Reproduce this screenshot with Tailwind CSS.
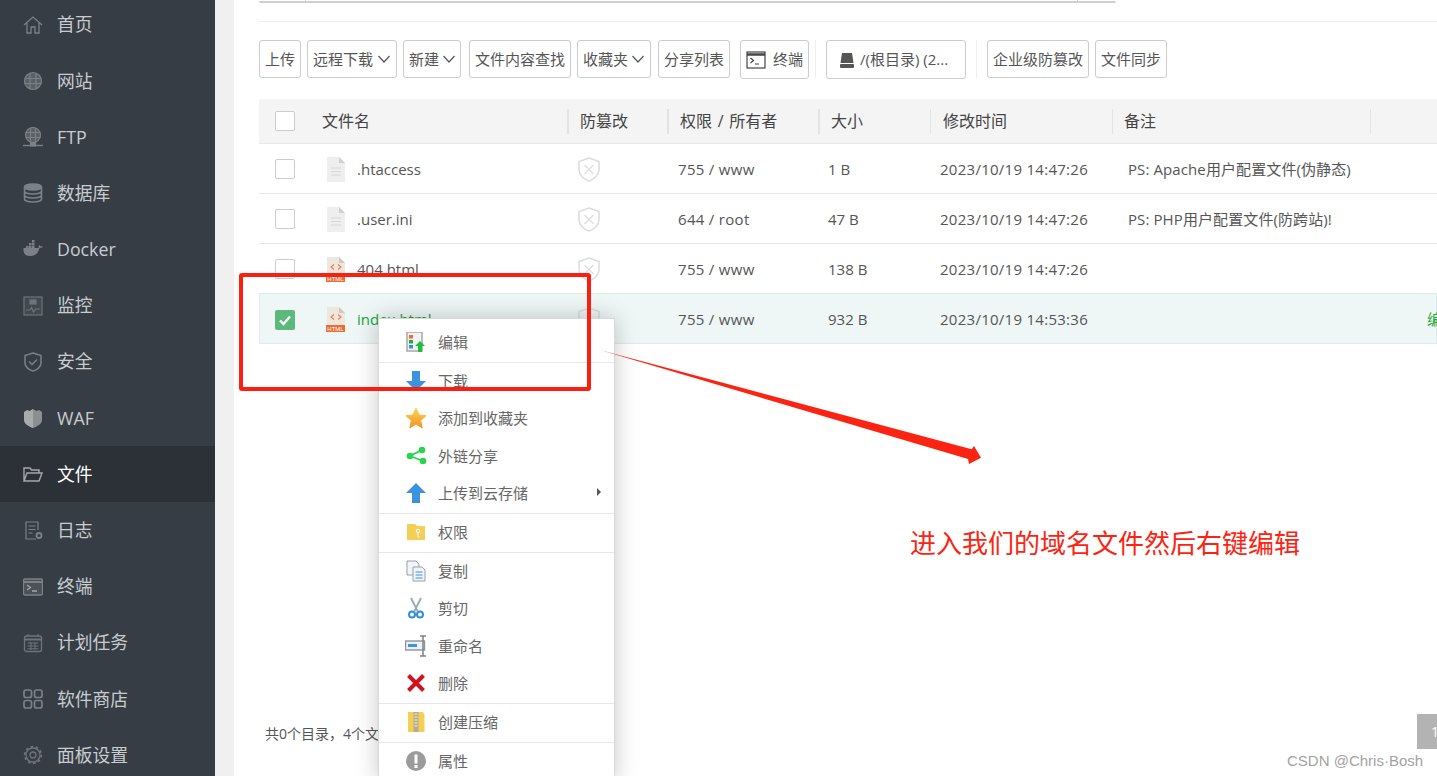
<!DOCTYPE html>
<html lang="zh-CN">
<head>
  <meta charset="UTF-8" />
  <script src="https://cdn.jsdelivr.net/npm/@tailwindcss/browser@4"></script>
  <title>文件</title>
</head>
<body class="relative flex h-screen w-screen overflow-hidden bg-white font-['Open_Sans','Noto_Sans_CJK_SC',sans-serif] text-[15px] text-[#555]">

  <!-- Sidebar -->
  <nav class="w-[215px] h-full shrink-0 bg-[#363d45] text-[17.8px] text-[#c8ccd0] overflow-hidden">
    <div class="-mt-[3.400px]">
      <a class="flex items-center h-[56.2px] pl-[23px]">
        <svg class="w-5 h-5 mr-[14px]" viewBox="0 0 20 20" fill="none" stroke="#7c8187" stroke-width="1.300"><path d="M1 10 10 2l9 8M4 8v10h4v-6h4v6h4V8"/></svg>首页</a>
      <a class="flex items-center h-[56.2px] pl-[23px]">
        <svg class="w-5 h-5 mr-[14px]" viewBox="0 0 20 20" fill="none" stroke="#7c8187" stroke-width="1.200"><circle cx="10" cy="10" r="8.500" fill="#5b6066"/><path d="M1.500 7.500h17M1.500 12.500h17M7 2v16M13 2v16"/></svg>网站</a>
      <a class="flex items-center h-[56.2px] pl-[23px]">
        <svg class="w-5 h-5 mr-[14px]" viewBox="0 0 20 20" fill="none" stroke="#7c8187" stroke-width="1.100"><circle cx="10" cy="8" r="7.500" fill="#5b6066"/><path d="M2.500 5.500h15M2.500 10.500h15M7.500 1v14M12.500 1v14"/><path d="M0 18.500h20" stroke-width="1.400"/><rect x="7.500" y="15.500" width="5" height="3.500" fill="#7c8187"/></svg>FTP</a>
      <a class="flex items-center h-[56.2px] pl-[23px]">
        <svg class="w-5 h-5 mr-[14px]" viewBox="0 0 20 20" fill="none" stroke="#7c8187" stroke-width="1.600"><ellipse cx="10" cy="4" rx="8.500" ry="3" fill="#7c8187"/><path d="M1.500 4v12c0 1.700 3.800 3 8.500 3s8.500-1.300 8.500-3V4M1.500 8c0 1.700 3.800 3 8.500 3s8.500-1.300 8.500-3M1.500 12c0 1.700 3.800 3 8.500 3s8.500-1.300 8.500-3"/></svg>数据库</a>
      <a class="flex items-center h-[56.2px] pl-[23px]">
        <svg class="w-5 h-5 mr-[14px]" viewBox="0 0 20 20" fill="#7c8187"><path d="M0 10.500h15c1 0 1.500-1 1.700-1.800 1 .3 2.300.2 3.300-.7-.7-.6-1.600-.8-2.500-.6-.3-.8-.8-1.200-1.300-1.500-.6 1-.8 2.200-.5 3H.5C0 13 1.500 17 6.500 17c5 0 8-2 9.500-6.500z"/><path d="M3 7h2.500v2.500H3zM6 7h2.500v2.500H6zM9 7h2.500v2.500H9zM6 4h2.500v2.500H6zM9 4h2.500v2.500H9zM9 1h2.500v2.500H9z"/></svg>Docker</a>
      <a class="flex items-center h-[56.2px] pl-[23px]">
        <svg class="w-5 h-5 mr-[14px]" viewBox="0 0 20 20" fill="none" stroke="#6f747a" stroke-width="1.200"><rect x="1" y="1" width="18" height="18" fill="#43494f"/><path d="M3 14h4l1.500-2.500L10.500 16l2-3H17"/><rect x="7" y="4" width="6" height="4" fill="#6f747a"/></svg>监控</a>
      <a class="flex items-center h-[56.2px] pl-[23px]">
        <svg class="w-5 h-5 mr-[14px]" viewBox="0 0 20 20" fill="none" stroke="#7c8187" stroke-width="1.500"><path d="M10 1 18 3.500V11c0 4-4 7-8 8-4-1-8-4-8-8V3.500z"/><path d="M6 9.500l3 3 5-5"/></svg>安全</a>
      <a class="flex items-center h-[56.2px] pl-[23px]">
        <svg class="w-5 h-5 mr-[14px]" viewBox="0 0 20 20"><path d="M10 1 6.500 3 4 2 1 4v8c0 4 5 6.500 9 8z" fill="#a9acaf"/><path d="M10 1l3.500 2L16 2l3 2v8c0 4-5 6.500-9 8z" fill="#8b8e92"/></svg>WAF</a>
      <a class="flex items-center h-[56.2px] pl-[23px] bg-[#2c3138] text-white">
        <svg class="w-5 h-5 mr-[14px]" viewBox="0 0 20 20" fill="none" stroke="#a4a7ab" stroke-width="1.400"><path d="M1 17V4h6l1.500 2H16v3M1 17l3-8h15l-3 8z"/></svg>文件</a>
      <a class="flex items-center h-[56.2px] pl-[23px]">
        <svg class="w-5 h-5 mr-[14px]" viewBox="0 0 20 20" fill="none" stroke="#7c8187" stroke-width="1.200"><path d="M15 10V2H3v17h10M5.500 6h7M5.500 9.500h7M5.500 13h4"/><circle cx="16" cy="15.500" r="2.500" stroke-width="1.800"/></svg>日志</a>
      <a class="flex items-center h-[56.2px] pl-[23px]">
        <svg class="w-5 h-5 mr-[14px]" viewBox="0 0 20 20" fill="none" stroke="#7c8187" stroke-width="1.300"><rect x=".5" y="2" width="19" height="16" rx="1.500" fill="#4b5157"/><path d="M.5 5h19" stroke-width="2"/><path d="M4 8l3.500 2.500L4 13M9 14h5" stroke="#a4a7ab"/></svg>终端</a>
      <a class="flex items-center h-[56.2px] pl-[23px]">
        <svg class="w-5 h-5 mr-[14px]" viewBox="0 0 20 20" fill="none" stroke="#6f747a" stroke-width="1.300"><rect x="1.500" y="3" width="17" height="15.500" rx="2"/><path d="M1.500 6.500h17" stroke-width="2"/><path d="M5 1v3M15 1v3M4.500 10h11M4.500 13h11M4.500 15.800h11M8 9v8M12 9v8" stroke-width="1"/></svg>计划任务</a>
      <a class="flex items-center h-[56.2px] pl-[23px]">
        <svg class="w-5 h-5 mr-[14px]" viewBox="0 0 20 20" fill="none" stroke="#7c8187" stroke-width="1.700"><rect x="1" y="1" width="7.500" height="7.500" rx="2"/><rect x="11.500" y="1" width="7.500" height="7.500" rx="2"/><rect x="1" y="11.500" width="7.500" height="7.500" rx="2"/><rect x="11.500" y="11.500" width="7.500" height="7.500" rx="2"/></svg>软件商店</a>
      <a class="flex items-center h-[56.2px] pl-[23px]">
        <svg class="w-5 h-5 mr-[14px]" viewBox="0 0 20 20" fill="none" stroke="#6f747a"><circle cx="10" cy="10" r="3" stroke-width="1.300"/><circle cx="10" cy="10" r="7" stroke-width="1.300"/><circle cx="10" cy="10" r="8.300" stroke-width="1.800" stroke-dasharray="2.600 2.600"/></svg>面板设置</a>
    </div>
  </nav>
  <div class="w-[19px] shrink-0 bg-[#f0f0f0]"></div>

  <!-- Main -->
  <main class="flex-1 min-w-0 pl-[25px] overflow-hidden">
    <div class="flex h-[3px] w-[857px] border-b-2 border-[#cfcfcf] rounded-b-[2px]">
      <div class="w-[47px] border-r border-[#cfcfcf]"></div>
      <div class="w-[772px] border-r border-[#cfcfcf]"></div>
    </div>
    <div class="mt-[18px] h-px bg-[#eeeeee]"></div>

    <!-- Toolbar -->
    <div class="mt-[18px] flex items-start h-[39px] text-[15px] text-[#555]">
      <button class="h-[38px] px-[5px] border border-[#ccc] rounded-[3px]">上传</button>
      <button class="ml-[6px] h-[38px] pl-[5px] pr-[5px] flex items-center border border-[#ccc] rounded-[3px]">远程下载<svg class="ml-[4px] w-[14px] h-[14px]" viewBox="0 0 14 14" fill="none" stroke="#555" stroke-width="1.200"><path d="M1.500 4 7 10l5.500-6"/></svg></button>
      <button class="ml-[6px] h-[38px] pl-[5px] pr-[4px] flex items-center border border-[#ccc] rounded-[3px]">新建<svg class="ml-[3px] w-[14px] h-[14px]" viewBox="0 0 14 14" fill="none" stroke="#555" stroke-width="1.200"><path d="M1.500 4 7 10l5.500-6"/></svg></button>
      <button class="ml-[8px] h-[38px] px-[5px] border border-[#ccc] rounded-[3px]">文件内容查找</button>
      <button class="ml-[6px] h-[38px] pl-[5px] pr-[5px] flex items-center border border-[#ccc] rounded-[3px]">收藏夹<svg class="ml-[3px] w-[14px] h-[14px]" viewBox="0 0 14 14" fill="none" stroke="#555" stroke-width="1.200"><path d="M1.500 4 7 10l5.500-6"/></svg></button>
      <button class="ml-[7px] h-[38px] px-[5px] border border-[#ccc] rounded-[3px]">分享列表</button>
      <button class="ml-[10px] h-[39px] w-[69px] flex items-center justify-center gap-[7px] border border-[#ccc] rounded-[3px]">
        <svg class="w-5 h-5" viewBox="0 0 20 20" fill="none" stroke="#444" stroke-width="1.200"><rect x="1" y="2" width="18" height="16" fill="#fff"/><path d="M1 4.500h18" stroke-width="2.500"/><path d="M4.500 8l3 2.500-3 2.500M9 14h4"/></svg>终端</button>
      <div class="ml-[6px] h-[38px] w-px bg-[#eeeeee]"></div>
      <button class="ml-[10px] h-[39px] w-[140px] pl-[12px] flex items-center gap-[5px] border border-[#ccc] rounded-[3px]">
        <svg class="w-4 h-4" viewBox="0 0 16 16" fill="#555"><path d="M3 1h10l1.500 10h-13z"/><rect x="1" y="12" width="14" height="4" rx="1"/></svg>/(根目录) (2...</button>
      <div class="ml-[10px] h-[38px] w-px bg-[#eeeeee]"></div>
      <button class="ml-[10px] h-[38px] px-[5px] border border-[#ccc] rounded-[3px]">企业级防篡改</button>
      <button class="ml-[6px] h-[38px] px-[5px] border border-[#ccc] rounded-[3px]">文件同步</button>
    </div>

    <!-- File table -->
    <div class="mt-[20px] text-[16px]">
      <div class="grid grid-cols-[308px_100px_151px_112px_182px_258px_1fr] items-center h-[45px] bg-[#f4f4f4] border-b border-[#e8e8e8] text-[#444]">
        <div class="flex items-center pl-[16px]"><span class="w-5 h-5 bg-white border border-[#ccc] rounded-[2px]"></span><span class="ml-[27px]">文件名</span></div>
        <div class="h-[25px] flex items-center border-l-2 border-[#e3e3e3] pl-[11px]">防篡改</div>
        <div class="h-[25px] flex items-center border-l-2 border-[#e3e3e3] pl-[11px] [word-spacing:1.500px] whitespace-pre">权限 / 所有者</div>
        <div class="h-[25px] flex items-center border-l-2 border-[#e3e3e3] pl-[11px]">大小</div>
        <div class="h-[25px] flex items-center border-l border-[#e3e3e3] pl-[12px]">修改时间</div>
        <div class="h-[25px] flex items-center border-l border-[#e3e3e3] pl-[11px]">备注</div>
        <div class="h-[25px] border-l border-[#e3e3e3]"></div>
      </div>

      <div class="grid grid-cols-[308px_100px_151px_112px_182px_258px_1fr] items-center h-[50px] pt-px border-b border-[#e8e8e8] text-[15px]">
        <div class="flex items-center pl-[16px]">
          <span class="w-5 h-5 bg-white border border-[#ccc] rounded-[2px]"></span>
          <svg class="ml-[31px] mr-[11px] w-5 h-[25px]" viewBox="0 0 20 25"><path d="M1 0h12l6 6v19H1z" fill="#eeeeee"/><path d="M13 0l6 6h-6z" fill="#cfcfcf"/><path d="M5 11h10M5 14.500h10M5 18h10" stroke="#d6d6d6" stroke-width="1.200"/></svg>.htaccess</div>
        <div class="pl-[11px]"><svg class="w-[22px] h-[25px]" viewBox="0 0 22 25" fill="none" stroke="#dcdcdc" stroke-width="1.500"><path d="M11 1 21 4.500V13c0 5-5 9.500-10 11C6 22.500 1 18 1 13V4.500z"/><path d="M6.500 8l9 9M15.500 8l-9 9" stroke-width="1.100"/></svg></div>
        <div class="pl-[11px] tracking-[0.3px]">755 / www</div>
        <div class="pl-[10px]">1 B</div>
        <div class="pl-[10px] tracking-[0.27px]">2023/10/19 14:47:26</div>
        <div class="pl-[16px] whitespace-nowrap tracking-[0.1px]">PS: Apache用户配置文件(伪静态)</div>
        <div></div>
      </div>

      <div class="grid grid-cols-[308px_100px_151px_112px_182px_258px_1fr] items-center h-[50px] pt-px border-b border-[#e8e8e8] text-[15px]">
        <div class="flex items-center pl-[16px]">
          <span class="w-5 h-5 bg-white border border-[#ccc] rounded-[2px]"></span>
          <svg class="ml-[31px] mr-[11px] w-5 h-[25px]" viewBox="0 0 20 25"><path d="M1 0h12l6 6v19H1z" fill="#eeeeee"/><path d="M13 0l6 6h-6z" fill="#cfcfcf"/><path d="M5 11h10M5 14.500h10M5 18h10" stroke="#d6d6d6" stroke-width="1.200"/></svg>.user.ini</div>
        <div class="pl-[11px]"><svg class="w-[22px] h-[25px]" viewBox="0 0 22 25" fill="none" stroke="#dcdcdc" stroke-width="1.500"><path d="M11 1 21 4.500V13c0 5-5 9.500-10 11C6 22.500 1 18 1 13V4.500z"/><path d="M6.500 8l9 9M15.500 8l-9 9" stroke-width="1.100"/></svg></div>
        <div class="pl-[11px] tracking-[0.3px]">644 / root</div>
        <div class="pl-[10px]">47 B</div>
        <div class="pl-[10px] tracking-[0.27px]">2023/10/19 14:47:26</div>
        <div class="pl-[16px] whitespace-nowrap tracking-[0.1px]">PS: PHP用户配置文件(防跨站)!</div>
        <div></div>
      </div>

      <div class="grid grid-cols-[308px_100px_151px_112px_182px_258px_1fr] items-center h-[50px] text-[15px]">
        <div class="flex items-center pl-[16px]">
          <span class="w-5 h-5 bg-white border border-[#ccc] rounded-[2px]"></span>
          <svg class="ml-[31px] mr-[11px] w-5 h-[25px]" viewBox="0 0 20 25"><path d="M1 0h12l6 6v19H1z" fill="#ece8e0"/><path d="M13 0l6 6h-6z" fill="#cfc9bd"/><path d="M8 7.500 5 10l3 2.500M12 7.500l3 2.500-3 2.500" fill="none" stroke="#ef7d4e" stroke-width="1.200"/><rect x="0" y="18" width="19" height="7" fill="#ee6d35"/><text x="9.500" y="24" text-anchor="middle" font-size="6" fill="#fff" font-family="Liberation Sans">HTML</text></svg>404.html</div>
        <div class="pl-[11px]"><svg class="w-[22px] h-[25px]" viewBox="0 0 22 25" fill="none" stroke="#dcdcdc" stroke-width="1.500"><path d="M11 1 21 4.500V13c0 5-5 9.500-10 11C6 22.500 1 18 1 13V4.500z"/><path d="M6.500 8l9 9M15.500 8l-9 9" stroke-width="1.100"/></svg></div>
        <div class="pl-[11px] tracking-[0.3px]">755 / www</div>
        <div class="pl-[10px]">138 B</div>
        <div class="pl-[10px] tracking-[0.27px]">2023/10/19 14:47:26</div>
        <div></div>
        <div></div>
      </div>

      <div class="relative -mt-px grid grid-cols-[308px_100px_151px_112px_182px_258px_1fr] items-center h-[51px] pt-[2px] bg-[#eef7f6] shadow-[inset_0_0_0_1px_#e0ece9] text-[15px]">
        <div class="flex items-center pl-[16px]">
          <span class="w-5 h-5 flex items-center justify-center bg-[#5cb97b] rounded-[2px]"><svg class="w-[14px] h-[14px]" viewBox="0 0 14 14" fill="none" stroke="#fff" stroke-width="2.400"><path d="M2 7.500l3.500 3.500L12 3.500"/></svg></span>
          <svg class="ml-[31px] mr-[11px] w-5 h-[25px]" viewBox="0 0 20 25"><path d="M1 0h12l6 6v19H1z" fill="#ece8e0"/><path d="M13 0l6 6h-6z" fill="#cfc9bd"/><path d="M8 7.500 5 10l3 2.500M12 7.500l3 2.500-3 2.500" fill="none" stroke="#ef7d4e" stroke-width="1.200"/><rect x="0" y="18" width="19" height="7" fill="#ee6d35"/><text x="9.500" y="24" text-anchor="middle" font-size="6" fill="#fff" font-family="Liberation Sans">HTML</text></svg><span class="text-[#20a53a]">index.html</span></div>
        <div class="pl-[11px]"><svg class="w-[22px] h-[25px]" viewBox="0 0 22 25" fill="none" stroke="#dcdcdc" stroke-width="1.500"><path d="M11 1 21 4.500V13c0 5-5 9.500-10 11C6 22.500 1 18 1 13V4.500z"/></svg></div>
        <div class="pl-[11px] tracking-[0.3px]">755 / www</div>
        <div class="pl-[10px]">932 B</div>
        <div class="pl-[10px] tracking-[0.27px]">2023/10/19 14:53:36</div>
        <div></div>
        <div class="pl-[57px] whitespace-nowrap text-[#20a53a]">编辑</div>
      </div>
    </div>

    <!-- Footer -->
    <div class="mt-[370px] flex justify-between h-[35px]">
      <span class="pl-[6px] pt-[9px] text-[14px] whitespace-nowrap">共0个目录，4个文件，文件大小：计算</span>
      <span class="w-5 h-[35px] pl-[14px] bg-[#b3b3b3] text-white text-[14px] leading-[35px] overflow-hidden">1</span>
    </div>
  </main>

  <!-- Right click menu -->
  <div class="absolute left-[378px] top-[318px] w-[237px] pt-[4.500px] bg-white border border-[#d8d8d8] shadow-[0_0_22px_rgba(0,0,0,0.22)] text-[15px] text-[#666]">
    <div class="flex items-center h-[38.500px] pb-[2px] pl-[26px]">
      <svg class="w-[22px] h-5 mr-[11px]" viewBox="0 0 22 20"><rect x="2" y="0" width="15" height="19" fill="#f2f2f2" stroke="#a8a8a8" stroke-width="1.500"/><rect x="4" y="3" width="4" height="3.500" fill="#ee6d35"/><rect x="4" y="8" width="4" height="3.500" fill="#2aa745"/><rect x="4" y="13" width="4" height="3.500" fill="#3d8fdc"/><path d="M15 9l5 5h-3v6h-4v-6h-3z" fill="#1fbf3a"/></svg>编辑</div>
    <div class="flex items-center h-[38.500px] pb-[1px] pl-[26px] border-t border-[#e8e8e8]">
      <svg class="w-[22px] h-[22px] mr-[11px]" viewBox="0 0 22 22"><path d="M7 1h8v10h6L11 21 1 11h6z" fill="#3a92e0"/></svg>下载</div>
    <div class="flex items-center h-[37.500px] pb-[2px] pl-[26px]">
      <svg class="w-[22px] h-[22px] mr-[11px]" viewBox="0 0 22 22"><defs><linearGradient id="star" x1="0" y1="0" x2="0" y2="1"><stop offset="0" stop-color="#fbd25a"/><stop offset="1" stop-color="#f3941e"/></linearGradient></defs><path d="M11 1l3 7 7 .7-5.300 4.800L17.200 21 11 17l-6.200 4 1.500-7.500L1 8.700 8 8z" fill="url(#star)" stroke="url(#star)" stroke-linejoin="round"/></svg>添加到收藏夹</div>
    <div class="flex items-center h-[37.500px] pb-[2px] pl-[26px]">
      <svg class="w-[22px] h-[22px] mr-[11px]" viewBox="0 0 22 22" fill="#2bd44f"><circle cx="17" cy="5" r="3.300"/><circle cx="5" cy="11" r="3.300"/><circle cx="18" cy="16" r="3.300"/><path d="M17 5 5 11l13 5" fill="none" stroke="#2bd44f" stroke-width="1.800"/></svg>外链分享</div>
    <div class="relative flex items-center h-[37.500px] pb-[2px] pl-[26px]">
      <svg class="w-[22px] h-[22px] mr-[11px]" viewBox="0 0 22 22"><path d="M7 21h8V11h6L11 1 1 11h6z" fill="#3a92e0"/></svg>上传到云存储
      <span class="absolute right-[13px] top-[12px] border-y-[4px] border-l-[4px] border-y-transparent border-l-[#555]"></span></div>
    <div class="flex items-center h-[39px] pb-[2px] pl-[26px] border-t border-[#e8e8e8]">
      <svg class="w-[22px] h-5 mr-[11px]" viewBox="0 0 22 20"><path d="M2 2h8l2 2h8v14H2z" fill="#f3cf55"/><circle cx="13" cy="9" r="1.800" fill="none" stroke="#fff"/><path d="M13 11v4h1.500" fill="none" stroke="#fff"/></svg>权限</div>
    <div class="flex items-center h-[38.500px] pb-[2px] pl-[26px] border-t border-[#e8e8e8]">
      <svg class="w-[22px] h-[22px] mr-[11px]" viewBox="0 0 22 22" fill="#f2f5f8" stroke="#9aa0a6"><path d="M2 1h9l3 3v11H2z"/><path d="M8 7h9l3 3v11H8z"/><path d="M10.500 12h7M10.500 15h7M10.500 18h7" stroke="#3a92e0"/></svg>复制</div>
    <div class="flex items-center h-[37.500px] pb-[2px] pl-[26px]">
      <svg class="w-[22px] h-[22px] mr-[11px]" viewBox="0 0 22 22" fill="none"><path d="M6 1l6.500 13M16 1 9.500 14" stroke="#9aa7b2" stroke-width="1.800"/><circle cx="7" cy="17.500" r="3" stroke="#2f8fdc" stroke-width="2"/><circle cx="15" cy="17.500" r="3" stroke="#2f8fdc" stroke-width="2"/></svg>剪切</div>
    <div class="flex items-center h-[37.500px] pb-[2px] pl-[26px]">
      <svg class="w-[22px] h-[22px] mr-[11px]" viewBox="0 0 22 22" fill="none"><rect x=".5" y="6" width="19" height="9" fill="#eef1f4" stroke="#8f959b" stroke-width="1.400"/><rect x="3" y="9" width="9" height="3" fill="#3a92e0"/><path d="M15 1h6M18 1v20M15 21h6" stroke="#7d8287" stroke-width="1.500"/></svg>重命名</div>
    <div class="flex items-center h-[37.500px] pb-[2px] pl-[26px]">
      <svg class="w-[22px] h-[22px] mr-[11px]" viewBox="0 0 22 22" fill="none"><path d="M3.500 3.500l15 15M18.500 3.500l-15 15" stroke="#d0121f" stroke-width="4"/></svg>删除</div>
    <div class="flex items-center h-[39px] pb-[2px] pl-[26px] border-t border-[#e8e8e8]">
      <svg class="w-[22px] h-[22px] mr-[11px]" viewBox="0 0 22 22"><path d="M3 1h15l1.500 3v17H3z" fill="#f3cf55"/><rect x="8.500" y="1" width="5" height="20" fill="#b7ad88"/><path d="M9.500 3h3M9.500 6h3M9.500 9h3M9.500 12h3M9.500 15h3" stroke="#eee" stroke-width="1.200"/></svg>创建压缩</div>
    <div class="flex items-center h-[38.500px] pb-[2px] pl-[26px] border-t border-[#e8e8e8]">
      <svg class="w-[22px] h-[22px] mr-[11px]" viewBox="0 0 22 22"><circle cx="11" cy="11" r="10" fill="#9b9b9b"/><rect x="9.500" y="4.500" width="3" height="9" fill="#fff"/><rect x="9.500" y="15" width="3" height="3" fill="#fff"/></svg>属性</div>
  </div>

  <!-- Annotations -->
  <div class="absolute left-[239px] top-[273px] w-[352px] h-[118px] border-[4px] border-[#fb1f12] rounded-[3px]"></div>
  <svg class="absolute left-[600px] top-[345px] w-[390px] h-[125px]" viewBox="600 345 390 125"><path d="M600 350 971.700 449.300 974 446 981 457.700 969 464 968 459z" fill="#fb2412"/></svg>
  <div class="absolute left-[910px] top-[524px] text-[26px] leading-[38px] text-[#fb2412] whitespace-nowrap">进入我们的域名文件然后右键编辑</div>
  <div class="absolute left-[1287px] top-[752px] font-['Liberation_Sans',sans-serif] text-[15px] leading-[17px] text-[#a3a3a3] whitespace-nowrap">CSDN @Chris·Bosh</div>
</body>
</html>
